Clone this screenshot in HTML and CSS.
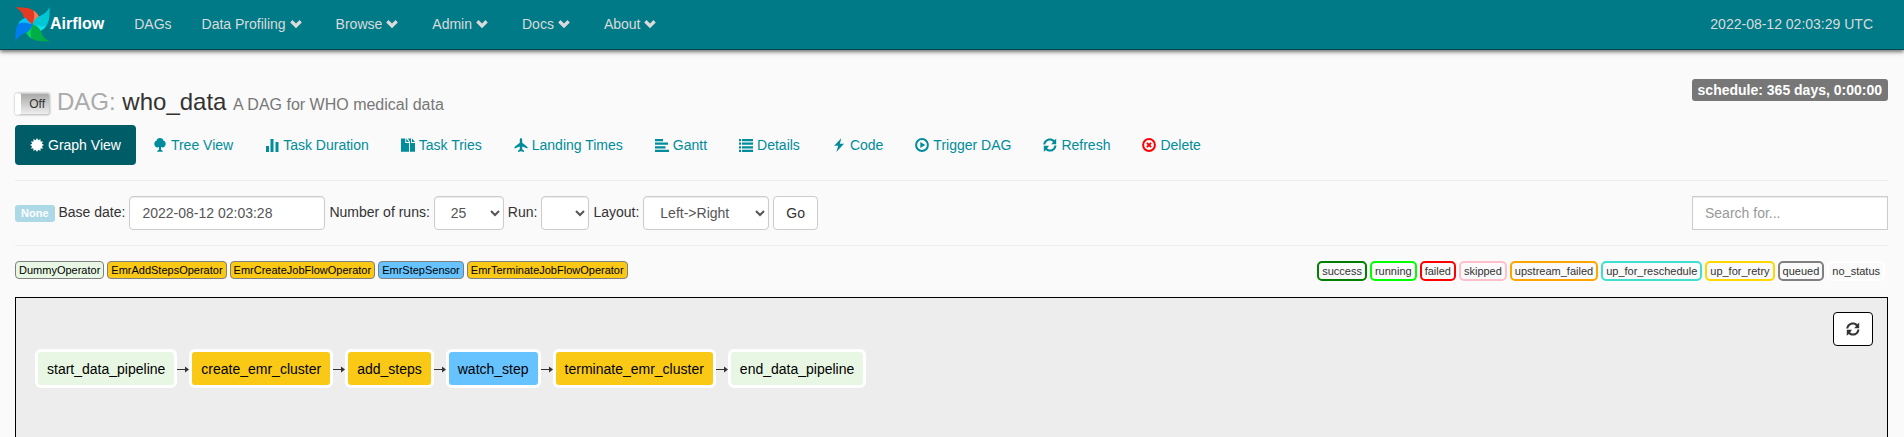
FILE: index.html
```html
<!DOCTYPE html>
<html lang="en">
<head>
<meta charset="utf-8">
<title>Airflow - DAG: who_data</title>
<link rel="stylesheet" href="styles.css">
</head>
<body>
<svg class="defs" aria-hidden="true">
  <symbol id="chevron" viewBox="0 0 14 14"><path d="M1.2 5.4 3.5 3.1 7 6.6 10.5 3.1 12.8 5.4 7 11.2Z"/></symbol>
  <symbol id="refresh" viewBox="0 0 14 14"><path d="M.3 6.6C.5 3 3.4.5 7 .5c1.800 0 3.300.7 4.400 1.700L13.200.5V6.200H8.200L10.100 4C9.300 3.100 8.200 2.500 7 2.500 4.400 2.500 2.500 4.300 2.300 6.600ZM13.400 7.400C13.200 11 10.500 13.500 7 13.500c-1.700 0-3.100-.6-4.200-1.600L.8 13.700V7.800H6L4.100 10.200c.8.8 1.800 1.300 2.900 1.300 2.500 0 4.200-1.900 4.400-4.100Z"/></symbol>
  <symbol id="arrow" viewBox="0 0 12 8"><path fill="none" stroke="#333" d="M0 4.500H9"/><path fill="#333" d="M8 1.500 12 4.500 8 7.500Z"/></symbol>
</svg>

<nav class="navbar">
  <a class="brand" href="#">
    <svg class="logo" viewBox="0 0 36 36" aria-hidden="true">
      <g><path fill="#e43921" d="M.3.3C8 .5 14 .5 18 3 21 5 21 11 18 18 14 17 10 14 9 10 8 6 5 3 .3.300Z"/><path fill="#ff7557" d="M18.500 3.300C22 5 24 8 25 11 22 13 20 15 18 18 20 12 20.500 7 18.500 3.300Z"/></g>
      <g transform="rotate(90 18 18)"><path fill="#00c7d4" d="M.3.3C8 .5 14 .5 18 3 21 5 21 11 18 18 14 17 10 14 9 10 8 6 5 3 .3.300Z"/><path fill="#11e1ee" d="M18.500 3.300C22 5 24 8 25 11 22 13 20 15 18 18 20 12 20.500 7 18.500 3.300Z"/></g>
      <g transform="rotate(180 18 18)"><path fill="#00ad46" d="M.3.3C8 .5 14 .5 18 3 21 5 21 11 18 18 14 17 10 14 9 10 8 6 5 3 .3.300Z"/><path fill="#04d659" d="M18.500 3.300C22 5 24 8 25 11 22 13 20 15 18 18 20 12 20.500 7 18.500 3.300Z"/></g>
      <g transform="rotate(270 18 18)"><path fill="#017cee" d="M.3.3C8 .5 14 .5 18 3 21 5 21 11 18 18 14 17 10 14 9 10 8 6 5 3 .3.300Z"/><path fill="#00c7ff" d="M18.500 3.300C22 5 24 8 25 11 22 13 20 15 18 18 20 12 20.500 7 18.500 3.300Z"/></g>
    </svg><span>Airflow</span>
  </a>
  <a class="menu" href="#">DAGs</a>
  <a class="menu drop" href="#">Data Profiling <svg class="icon"><use href="#chevron"/></svg></a>
  <a class="menu drop" href="#">Browse <svg class="icon"><use href="#chevron"/></svg></a>
  <a class="menu drop" href="#">Admin <svg class="icon"><use href="#chevron"/></svg></a>
  <a class="menu drop" href="#">Docs <svg class="icon"><use href="#chevron"/></svg></a>
  <a class="menu drop" href="#">About <svg class="icon"><use href="#chevron"/></svg></a>
  <a class="menu clock" href="#">2022-08-12 02:03:29 UTC</a>
</nav>

<main class="page">
  <header class="title-row">
    <button class="toggle" type="button" role="switch" aria-checked="false">Off</button>
    <h1 class="title"><span class="muted">DAG:</span> who_data <small>A DAG for WHO medical data</small></h1>
    <span class="schedule">schedule: 365 days, 0:00:00</span>
  </header>

  <nav class="pills">
    <a class="pill active" href="#"><svg class="icon" viewBox="0 0 14 14"><path d="M7 0 8.300 2.200 10.500.9V3.500H13.100L11.800 5.700 14 7 11.800 8.300 13.100 10.500H10.500V13.100L8.300 11.800 7 14 5.700 11.800 3.500 13.100V10.500H.9L2.200 8.300 0 7 2.200 5.700.9 3.500H3.500V.9L5.700 2.200Z"/></svg>Graph View</a>
    <a class="pill" href="#"><svg class="icon" viewBox="0 0 14 14"><path d="M7 0c2 0 3.200 1.200 3.300 2.600C11.800 3 12.700 4.400 12.700 6c0 2-1.500 3.400-3.400 3.400-.5 0-.9-.1-1.300-.3V11.500C8.800 12 9.700 12.600 9.900 13.800H4.100C4.300 12.600 5.200 12 6 11.500V9.100c-.4.2-.8.3-1.300.3C2.800 9.400 1.300 8 1.300 6c0-1.600.9-3 2.400-3.400C3.800 1.200 5 0 7 0Z"/></svg>Tree View</a>
    <a class="pill" href="#"><svg class="icon" viewBox="0 0 14 14"><path d="M1 8h3v6H1zM5.500 1h3v13h-3zM10.500 4h3v10h-3z"/></svg>Task Duration</a>
    <a class="pill" href="#"><svg class="icon" viewBox="0 0 14 14"><path d="M0 .5H4.300V5H8V13.800H0ZM5.200.5 8 3.900H5.200ZM7 .5H10V5H14V13.800H9V4ZM11 .5 14 4H11Z"/></svg>Task Tries</a>
    <a class="pill" href="#"><svg class="icon" viewBox="0 0 14 14"><path d="M7 0C7.800 0 8.200 1 8.200 2V4.800L13.500 9V10.500L8.200 8.500V11.200L10 12.800V14L7 13.200 4 14V12.800L5.800 11.200V8.500L.5 10.500V9L5.800 4.800V2C5.800 1 6.200 0 7 0Z"/></svg>Landing Times</a>
    <a class="pill" href="#"><svg class="icon" viewBox="0 0 14 14"><path d="M0 1H8v2.200H0zM0 4.600H13v2.200H0zM0 8.200H10.500v2.200H0zM0 11.800H14V14H0z"/></svg>Gantt</a>
    <a class="pill" href="#"><svg class="icon" viewBox="0 0 14 14"><path d="M0 1H2v2.200H0zM3 1H14v2.200H3zM0 4.600H2v2.200H0zM3 4.600H14v2.200H3zM0 8.200H2v2.200H0zM3 8.200H14v2.200H3zM0 11.800H2V14H0zM3 11.800H14V14H3z"/></svg>Details</a>
    <a class="pill" href="#"><svg class="icon" viewBox="0 0 14 14"><path d="M9.200.2 2.200 7.700H6.200L4.400 14 12 5.800H7.900Z"/></svg>Code</a>
    <a class="pill" href="#"><svg class="icon" viewBox="0 0 14 14"><circle class="ring" cx="7" cy="7" r="5.900"/><path d="M5.300 4 10.300 7 5.300 10Z"/></svg>Trigger DAG</a>
    <a class="pill" href="#"><svg class="icon"><use href="#refresh"/></svg>Refresh</a>
    <a class="pill" href="#"><svg class="icon danger" viewBox="0 0 14 14"><circle class="ring" cx="7" cy="7" r="5.900"/><path class="ring" d="M4.900 4.900 9.100 9.100M9.100 4.900 4.900 9.100"/></svg>Delete</a>
  </nav>

  <form class="controls">
    <span class="state">None</span>
    <label for="base-date">Base date:</label>
    <input class="field" id="base-date" type="text" value="2022-08-12 02:03:28">
    <label for="runs">Number of runs:</label>
    <select class="field" id="runs"><option>5</option><option selected>25</option><option>365</option></select>
    <label for="run">Run:</label>
    <select class="field run" id="run"><option></option></select>
    <label for="layout">Layout:</label>
    <select class="field" id="layout"><option>Left-&gt;Right</option><option>Bottom-&gt;Top</option></select>
    <button class="go" type="button">Go</button>
    <input class="field search" type="text" placeholder="Search for..." aria-label="Search for">
  </form>

  <div class="legend">
    <span class="operator dummy">DummyOperator</span>
    <span class="operator emr">EmrAddStepsOperator</span>
    <span class="operator emr">EmrCreateJobFlowOperator</span>
    <span class="operator sensor">EmrStepSensor</span>
    <span class="operator emr">EmrTerminateJobFlowOperator</span>
    <div class="statuses">
      <span class="status success">success</span>
      <span class="status running">running</span>
      <span class="status failed">failed</span>
      <span class="status skipped">skipped</span>
      <span class="status upstream">upstream_failed</span>
      <span class="status reschedule">up_for_reschedule</span>
      <span class="status retry">up_for_retry</span>
      <span class="status queued">queued</span>
      <span class="status none">no_status</span>
    </div>
  </div>

  <section class="graph">
    <div class="flow">
      <div class="node dummy">start_data_pipeline</div>
      <svg class="arrow"><use href="#arrow"/></svg>
      <div class="node emr">create_emr_cluster</div>
      <svg class="arrow"><use href="#arrow"/></svg>
      <div class="node emr">add_steps</div>
      <svg class="arrow"><use href="#arrow"/></svg>
      <div class="node sensor">watch_step</div>
      <svg class="arrow"><use href="#arrow"/></svg>
      <div class="node emr">terminate_emr_cluster</div>
      <svg class="arrow"><use href="#arrow"/></svg>
      <div class="node dummy">end_data_pipeline</div>
    </div>
    <button class="reload" type="button" aria-label="Refresh"><svg class="icon"><use href="#refresh"/></svg></button>
  </section>
</main>
</body>
</html>
```
FILE: styles.css
```css
* { box-sizing: border-box; }

html, body { height: 100%; }

body {
  margin: 0;
  display: flex;
  flex-direction: column;
  overflow: hidden;
  background: #fafafa;
  color: #333;
  font: 14px/20px "Liberation Sans", Arial, sans-serif;
}

a { color: inherit; text-decoration: none; }
button, input, select { font: inherit; color: inherit; }
.defs { display: none; }
.icon { width: 14px; height: 14px; flex: none; fill: currentColor; }
.ring { fill: none; stroke: currentColor; stroke-width: 2; }

.navbar {
  display: flex;
  align-items: center;
  flex: none;
  height: 50px;
  padding: 0 16px 1px 15px;
  background: #007a87;
  border-bottom: 1px solid #004a52;
  box-shadow: 0 2px 4px rgba(0, 0, 0, .55);
  color: #dadada;
}
.brand {
  display: flex;
  align-items: center;
  padding-right: 15px;
  color: #fff;
  font-size: 16px;
  font-weight: bold;
}
.logo { width: 35px; height: 35px; }
.menu { display: flex; align-items: center; gap: 3px; padding: 0 15px; }
.drop { padding-right: 18px; }
.clock { margin-left: auto; }

.page { display: flex; flex-direction: column; flex: 1; padding: 29px 16px 0 15px; }

.title-row { display: flex; align-items: flex-start; padding-bottom: 10px; }
.toggle {
  width: 35px;
  height: 22px;
  margin-top: 14px;
  padding: 0 4px 0 0;
  border: 1px solid #ccc;
  border-left: 6px solid #fff;
  border-radius: 3px;
  background: linear-gradient(#aaa, #eee);
  box-shadow: 0 0 2px #999;
  font-size: 12px;
  line-height: 20px;
  text-align: right;
}
.title { margin: 10px 0 0 7px; font-size: 24px; line-height: 26px; font-weight: normal; }
.muted { color: #aaa; }
.title small { font-size: 16px; line-height: 16px; color: #777; }
.schedule {
  margin-left: auto;
  padding: 1px 6px;
  border-radius: 3px;
  background: #777;
  color: #fff;
  font-weight: bold;
}

.pills { display: flex; gap: 2px; padding-bottom: 15px; border-bottom: 1px solid #eee; color: #008c9b; }
.pill { display: flex; align-items: center; gap: 4px; padding: 10px 15px; border-radius: 4px; }
.active { background: #005c66; color: #fff; }
.danger { color: #f00; }

.controls { display: flex; align-items: center; gap: 4px; padding: 15px 0; border-bottom: 1px solid #eee; }
.controls label { padding-bottom: 2px; }
.state {
  padding: 1px 6px;
  border-radius: 3px;
  background: #add8e6;
  color: #fff;
  font-size: 11px;
  line-height: 15px;
  font-weight: bold;
}
.field {
  height: 34px;
  padding: 6px 12px;
  border: 1px solid #ccc;
  border-radius: 4px;
  background: #fff;
  color: #555;
  box-shadow: inset 0 1px 1px rgba(0, 0, 0, .08);
}
input.field { width: 196px; }
input.field::placeholder { color: #999; }
.run { width: 48px; }
.go { height: 34px; padding: 0 12px; border: 1px solid #ccc; border-radius: 4px; background: #fff; }
.controls .search { margin-left: auto; border-radius: 0; }

.legend {
  display: flex;
  align-items: flex-start;
  gap: 3px;
  padding: 15px 0 16px;
  font-size: 11px;
  line-height: 16px;
}
.operator { padding: 0 3px; border: 1px solid #808080; border-radius: 4px; color: #000; }
.dummy { background: #e8f7e4; }
.emr { background: #f9c915; }
.sensor { background: #66c3ff; }
.statuses { display: flex; gap: 3px; margin-left: auto; padding-right: 3px; }
.status { padding: 0 3px; border: 2px solid; border-radius: 5px; }
.success { border-color: #008000; }
.running { border-color: #00ff00; }
.failed { border-color: #ff0000; }
.skipped { border-color: #ffc0cb; }
.upstream { border-color: #ffa500; }
.reschedule { border-color: #40e0d0; }
.retry { border-color: #ffd700; }
.queued { border-color: #808080; }
.none { border-color: #fff; }

.graph {
  display: flex;
  justify-content: space-between;
  align-items: flex-start;
  flex: 1;
  padding: 14px;
  border: 1px solid #000;
  border-bottom: 0;
  background: #ededed;
}
.flow { display: flex; align-items: center; padding: 37px 0 0 5px; }
.node { padding: 7px 9px 6px; border: 3px solid #fff; border-radius: 6px; color: #000; }
.arrow { width: 12px; height: 8px; }
.reload {
  display: flex;
  align-items: center;
  justify-content: center;
  width: 40px;
  height: 34px;
  padding: 0;
  border: 1px solid #000;
  border-radius: 4px;
  background: #fff;
}
```
